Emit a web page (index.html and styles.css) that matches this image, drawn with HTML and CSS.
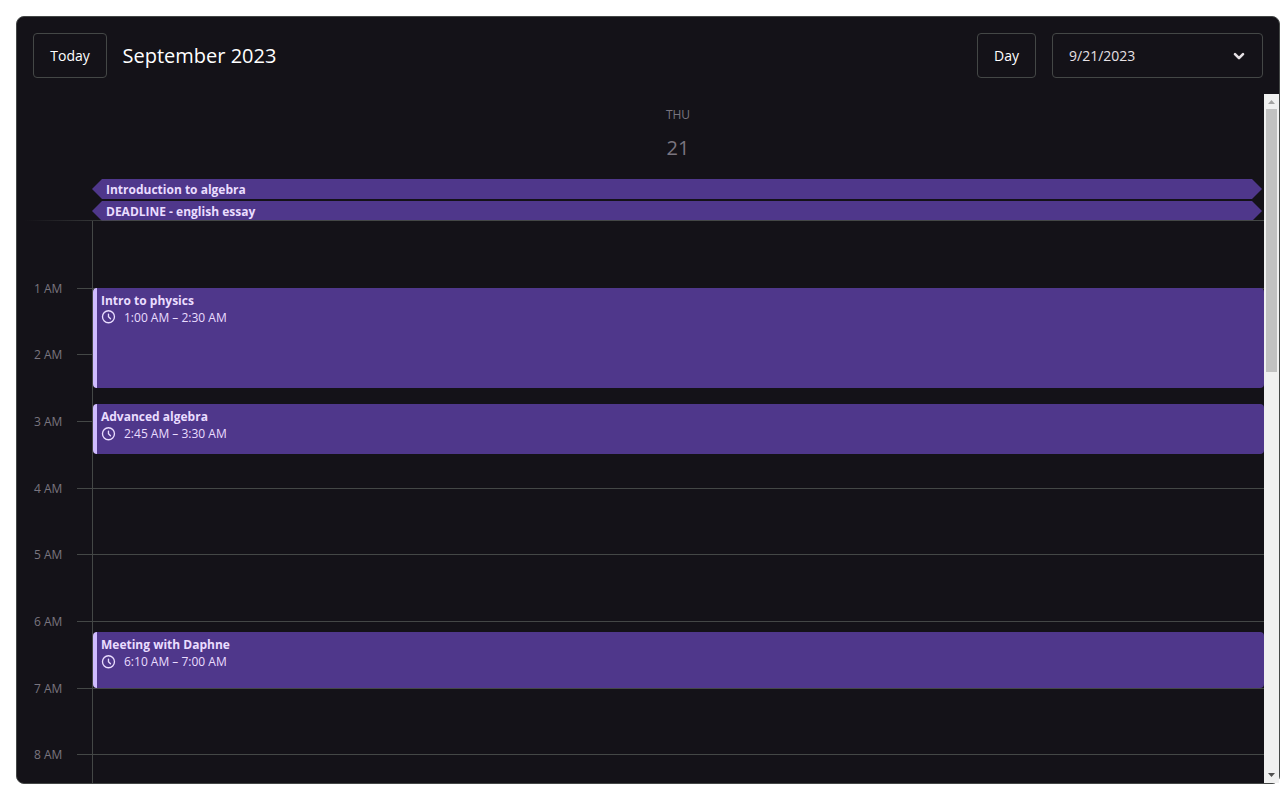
FILE: index.html
```html
<!DOCTYPE html>
<html lang="en">
<head>
<meta charset="utf-8">
<title>Calendar</title>
<link rel="stylesheet" href="styles.css">
</head>
<body>
<svg class="defs" width="0" height="0" aria-hidden="true">
  <symbol id="clock" viewBox="0.8 0.4 24 24" fill="none" stroke="currentColor" stroke-width="2" stroke-linecap="round" stroke-linejoin="round">
    <path d="M12 8V12L15 15"/>
    <circle cx="12" cy="12" r="9"/>
  </symbol>
</svg>
<main class="calendar">
  <header class="toolbar">
    <button class="box today">Today</button>
    <span class="range">September 2023</span>
    <button class="box view">Day</button>
    <div class="box date-input">
      <span>9/21/2023</span>
      <svg class="chevron" viewBox="0 0 14 14" fill="none" stroke="currentColor" stroke-width="2.6" stroke-linecap="round" stroke-linejoin="round"><path d="M3 5.2L7 9.2L11 5.2"/></svg>
    </div>
  </header>
  <section class="body">
    <div class="week">
      <div class="week-header">
        <div class="day-name">THU</div>
        <div class="day-number">21</div>
        <div class="date-events">
          <div class="date-event">Introduction to algebra</div>
          <div class="date-event">DEADLINE - english essay</div>
        </div>
        <div class="header-line"></div>
      </div>
      <div class="grid">
        <div class="axis">
          <div class="hour"></div>
          <div class="hour"><span>1 AM</span></div>
          <div class="hour"><span>2 AM</span></div>
          <div class="hour"><span>3 AM</span></div>
          <div class="hour"><span>4 AM</span></div>
          <div class="hour"><span>5 AM</span></div>
          <div class="hour"><span>6 AM</span></div>
          <div class="hour"><span>7 AM</span></div>
          <div class="hour"><span>8 AM</span></div>
        </div>
        <div class="day">
          <article class="event physics">
            <div class="title">Intro to physics</div>
            <div class="time"><svg class="clock"><use href="#clock"/></svg>1:00 AM – 2:30 AM</div>
          </article>
          <article class="event algebra">
            <div class="title">Advanced algebra</div>
            <div class="time"><svg class="clock"><use href="#clock"/></svg>2:45 AM – 3:30 AM</div>
          </article>
          <article class="event meeting">
            <div class="title">Meeting with Daphne</div>
            <div class="time"><svg class="clock"><use href="#clock"/></svg>6:10 AM – 7:00 AM</div>
          </article>
        </div>
      </div>
    </div>
    <div class="scrollbar">
      <svg class="arrow" viewBox="0 0 15 15"><path d="M4 10L7.5 6L11 10Z" fill="#a3a3a3"/></svg>
      <div class="thumb"></div>
      <svg class="arrow down" viewBox="0 0 15 15"><path d="M4 5L7.5 9L11 5Z" fill="#505050"/></svg>
    </div>
  </section>
</main>
</body>
</html>
```

FILE: styles.css
```css
* { box-sizing: border-box; }

body {
  margin: 0;
  padding: 16px 0 16px 16px;
  height: 800px;
  overflow: hidden;
  background: #fff;
  font-family: "Open Sans", "Noto Sans", sans-serif;
}

.defs { display: block; }

.calendar {
  display: flex;
  flex-direction: column;
  height: 768px;
  border: 1px solid #444746;
  border-radius: 8px;
  background: #141218;
  color: #e6e1e5;
}

.toolbar {
  display: flex;
  align-items: center;
  height: 77px;
  padding: 0 16px;
}

.box {
  height: 45px;
  padding: 0 16px;
  border: 1px solid #444746;
  border-radius: 4px;
  background: transparent;
  color: #fff;
  font: 14px "Open Sans", "Noto Sans", sans-serif;
}

.today { width: 74px; }

.range {
  flex: 1;
  margin-left: 15.5px;
  color: #fff;
  font-size: 20px;
}

.view { width: 59px; margin-right: 16px; }

.date-input {
  display: flex;
  align-items: center;
  justify-content: space-between;
  width: 211px;
  color: #e6e1e5;
}

.chevron { width: 14px; height: 14px; }

.body {
  display: flex;
  flex: 1;
  min-height: 0;
}

.week {
  flex: 1;
  min-width: 0;
  overflow: hidden;
}

.week-header {
  height: 127px;
  color: #7a757f;
  text-align: center;
}

.day-name {
  height: 40px;
  padding: 12px 0 0 75px;
  font-size: 12px;
  line-height: 17px;
}

.day-number {
  height: 45px;
  padding-left: 75px;
  font-size: 20px;
  line-height: 28px;
}

.date-events {
  display: grid;
  gap: 2px;
  height: 41px;
  margin-left: 75px;
  padding-right: 2px;
}

.date-event {
  height: 20px;
  padding-left: 14px;
  background: #4f378b;
  clip-path: polygon(0 50%, 10px 0, calc(100% - 10px) 0, 100% 50%, calc(100% - 10px) 100%, 10px 100%);
  color: #eaddff;
  font-size: 12px;
  font-weight: 700;
  line-height: 21px;
  text-align: left;
}

.header-line {
  position: relative;
  height: 1px;
  background: linear-gradient(to right, transparent 8px, #444746 110px);
}

.grid {
  display: grid;
  grid-template-columns: 100%;
  height: 1600px;
}

.axis, .day { grid-area: 1 / 1; }

.hour {
  height: calc(1600px / 24);
  margin-left: 60px;
  border-top: 1px solid #444746;
  color: #7a757f;
  font-size: 12px;
  line-height: 16px;
}

.hour:first-child { border-top-color: transparent; }

.hour span {
  display: block;
  margin: -8px 0 0 -43px;
}

.day {
  display: grid;
  grid-template-rows: repeat(288, 5.5625px);
  margin: -0.15px 0 0 75px;
  border-left: 1px solid #444746;
}

.event {
  padding: 4px;
  border-left: 4px solid #d0bcff;
  border-radius: 4px;
  background: #4f378b;
  color: #eaddff;
  font-size: 12px;
  line-height: 17px;
}

.physics { grid-row: 13 / 31; }
.algebra { grid-row: 34 / 43; }
.meeting { grid-row: 75 / 85; }

.title { font-weight: 700; }

.time {
  display: flex;
  align-items: center;
}

.clock {
  width: 16px;
  height: 16px;
  margin-right: 7px;
}

.scrollbar {
  display: flex;
  flex-direction: column;
  width: 15px;
  background: #f0f0f0;
}

.arrow {
  display: block;
  width: 15px;
  height: 15px;
}

.down { margin-top: auto; }

.thumb {
  height: 263px;
  margin: 0 2px;
  background: #c1c1c1;
}
```
